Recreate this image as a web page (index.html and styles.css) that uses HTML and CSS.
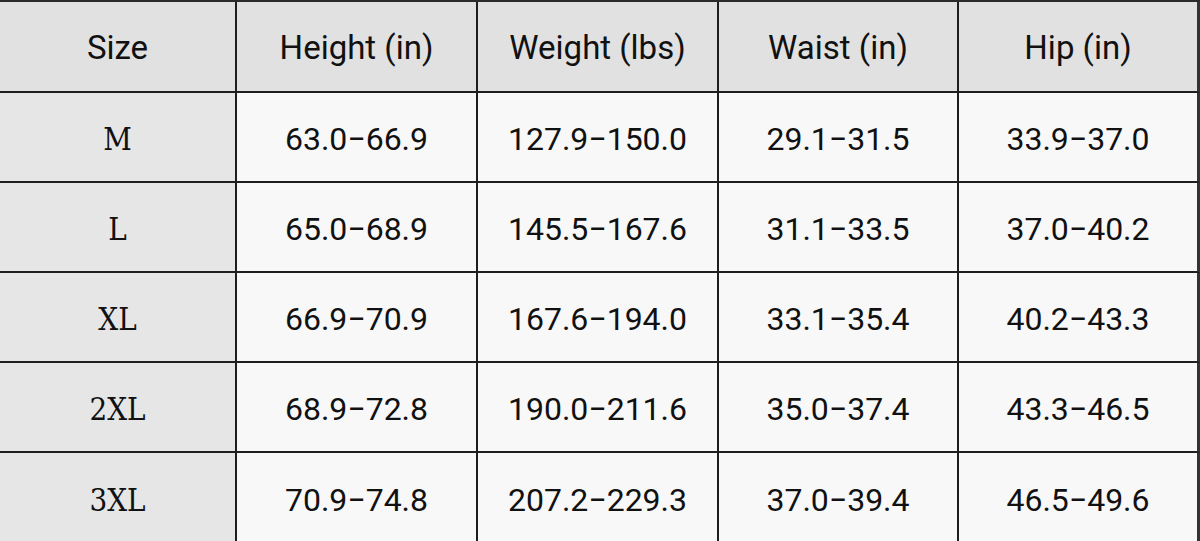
FILE: index.html
```html
<!DOCTYPE html>
<html>
<head>
<meta charset="utf-8">
<link rel="stylesheet" href="styles.css">
</head>
<body>
<div class="chart">
  <div class="cell head">Size</div>
  <div class="cell head">Height (in)</div>
  <div class="cell head">Weight (lbs)</div>
  <div class="cell head">Waist (in)</div>
  <div class="cell head last">Hip (in)</div>

  <div class="cell size">M</div>
  <div class="cell num">63.0−66.9</div>
  <div class="cell num">127.9−150.0</div>
  <div class="cell num">29.1−31.5</div>
  <div class="cell num last">33.9−37.0</div>

  <div class="cell size">L</div>
  <div class="cell num">65.0−68.9</div>
  <div class="cell num">145.5−167.6</div>
  <div class="cell num">31.1−33.5</div>
  <div class="cell num last">37.0−40.2</div>

  <div class="cell size">XL</div>
  <div class="cell num">66.9−70.9</div>
  <div class="cell num">167.6−194.0</div>
  <div class="cell num">33.1−35.4</div>
  <div class="cell num last">40.2−43.3</div>

  <div class="cell size">2XL</div>
  <div class="cell num">68.9−72.8</div>
  <div class="cell num">190.0−211.6</div>
  <div class="cell num">35.0−37.4</div>
  <div class="cell num last">43.3−46.5</div>

  <div class="cell size bottom">3XL</div>
  <div class="cell num bottom">70.9−74.8</div>
  <div class="cell num bottom">207.2−229.3</div>
  <div class="cell num bottom">37.0−39.4</div>
  <div class="cell num last bottom">46.5−49.6</div>
</div>
</body>
</html>
```

FILE: styles.css
```css
html, body {
  margin: 0;
  padding: 0;
  background: #f6f6f6;
}

.chart {
  width: 1200px;
  height: 541px;
  box-sizing: border-box;
  display: grid;
  grid-template-columns: 237px 241px 241px 240px 241px;
  grid-template-rows: 91px 90px 90px 90px 90px 89px;
  border-top: 2px solid #2a2a2a;
  border-bottom: 3px solid #3a3a3a;
}

.cell {
  display: flex;
  align-items: center;
  justify-content: center;
  border-right: 2px solid #1e1e1e;
  border-bottom: 2px solid #1e1e1e;
  color: #111;
  background: #f7f7f7;
}

.cell.last {
  border-right: 3px solid #333;
}

.cell.bottom {
  border-bottom: none;
}

.head {
  background: #e1e1e1;
  font-family: Roboto, "Liberation Sans", sans-serif;
  font-size: 33px;
  padding-top: 2px;
}

.size {
  background: #e6e6e6;
  font-family: "DejaVu Serif", "Liberation Serif", serif;
  font-stretch: condensed;
  font-size: 31px;
  padding-top: 4px;
}

.num {
  font-family: Roboto, "Liberation Sans", sans-serif;
  font-size: 32px;
  background: #f8f8f8;
  padding-top: 4px;
}
```
